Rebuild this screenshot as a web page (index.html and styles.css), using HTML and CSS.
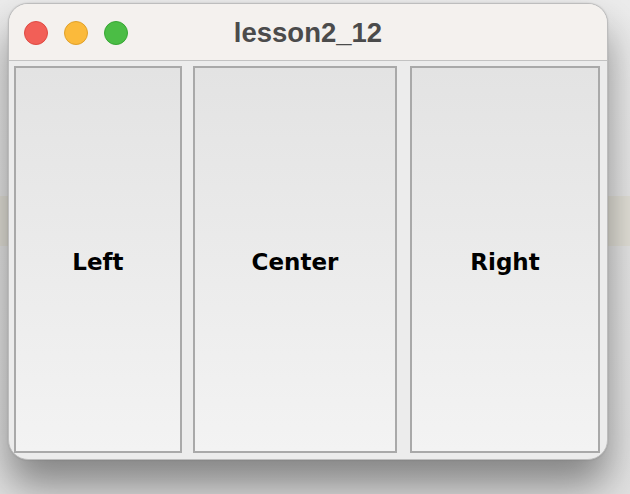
FILE: index.html
```html
<!DOCTYPE html>
<html>
<head>
<meta charset="utf-8">
<link rel="stylesheet" href="styles.css">
</head>
<body>
<div class="window">
  <div class="titlebar">
    <div class="lights">
      <span class="light red"></span>
      <span class="light yellow"></span>
      <span class="light green"></span>
    </div>
    <div class="title">lesson2_12</div>
  </div>
  <div class="content">
    <div class="btn btn-left">Left</div>
    <div class="btn btn-center">Center</div>
    <div class="btn btn-right">Right</div>
  </div>
</div>
</body>
</html>
```
FILE: styles.css
```css
html, body {
  margin: 0;
  padding: 0;
}
body {
  width: 630px;
  height: 494px;
  overflow: hidden;
  background:
    linear-gradient(to bottom, transparent 0, transparent 196px, #e4e2d9 196px, #e4e2d9 246px, transparent 246px),
    linear-gradient(to bottom, #ececec, #e2e2e2);
  padding-top: 3px;
  padding-left: 8px;
  box-sizing: border-box;
}
.window {
  width: 600px;
  height: 457px;
  box-sizing: border-box;
  border: 1px solid #bdbdbd;
  border-radius: 20px;
  overflow: hidden;
  background: #ececec;
  display: flex;
  flex-direction: column;
  box-shadow: 0 26px 40px rgba(0,0,0,0.42), 0 0 2px rgba(0,0,0,0.15);
}
.titlebar {
  height: 56px;
  flex: none;
  background: #f4f1ee;
  border-bottom: 1px solid #c2c2c2;
  position: relative;
  display: flex;
  align-items: center;
  justify-content: center;
}
.lights {
  position: absolute;
  left: 15px;
  top: 17px;
  display: flex;
  gap: 16px;
}
.light {
  width: 22px;
  height: 22px;
  border-radius: 50%;
  border: 1px solid;
  display: block;
}
.red { background: #f25f57; border-color: #de4a42; }
.yellow { background: #fbba3b; border-color: #dfa02a; }
.green { background: #4bbd45; border-color: #37a634; }
.title {
  font-family: "Liberation Sans", Arial, sans-serif;
  font-weight: bold;
  font-size: 27.5px;
  color: #4b4b4b;
  margin-top: 1px;
}
.content {
  flex: 1;
  display: flex;
  padding: 5px 7px 6px 5px;
  gap: 11px;
}
.btn {
  box-sizing: border-box;
  border: 2px solid #a9a9a9;
  background: linear-gradient(to bottom, #e3e3e3, #f3f3f3);
  display: flex;
  align-items: center;
  justify-content: center;
  font-family: "DejaVu Sans", Verdana, sans-serif;
  font-weight: bold;
  font-size: 23px;
  color: #000;
  padding-top: 4px;
}
.btn-left { width: 168px; }
.btn-center { width: 204px; margin-right: 2px; }
.btn-right { width: 190px; }
```
